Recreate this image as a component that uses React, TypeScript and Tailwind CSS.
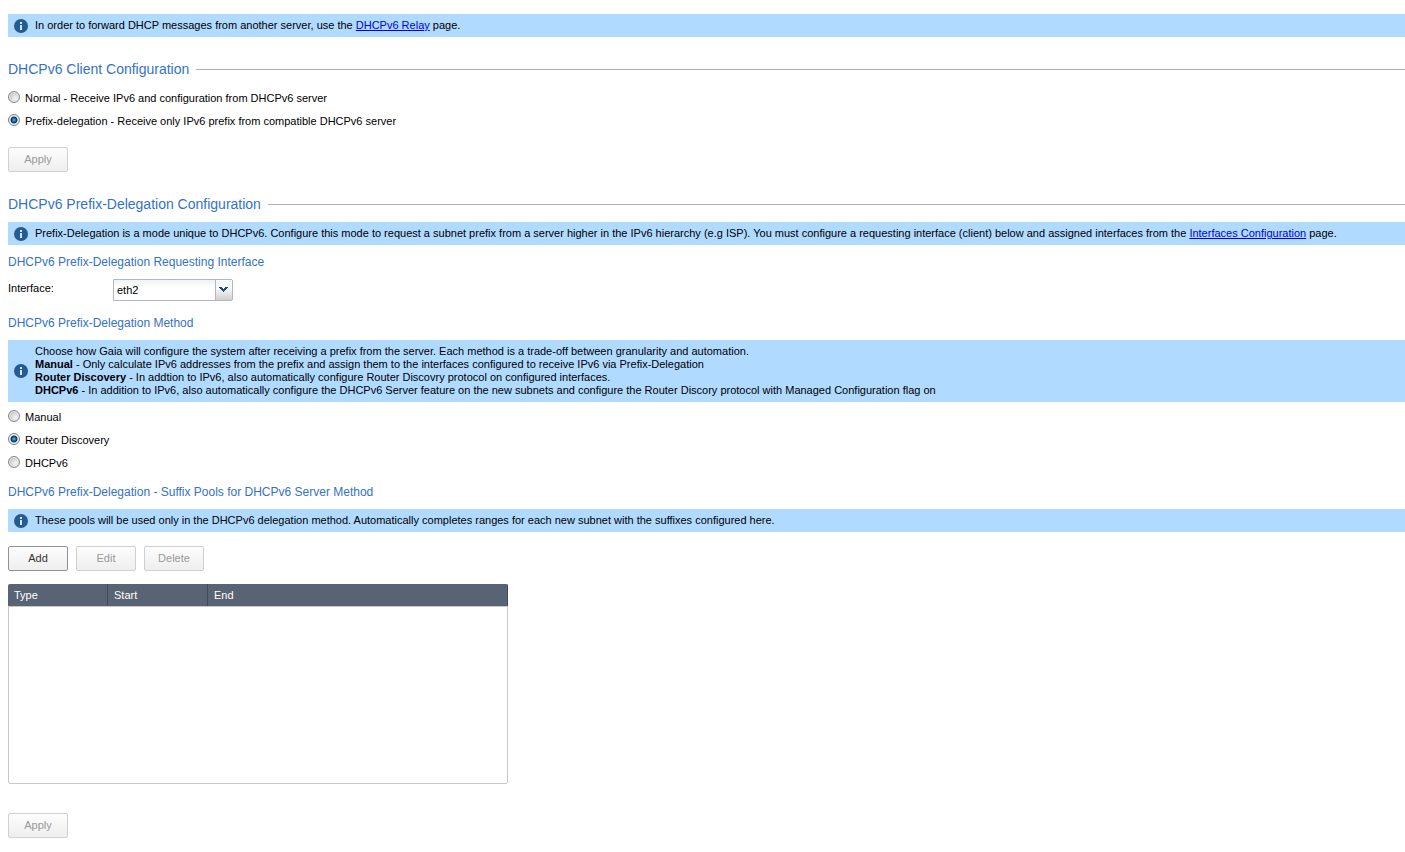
import { useState } from "react";
import type { ReactNode } from "react";

const clientModes = [
  { value: "normal", label: "Normal - Receive IPv6 and configuration from DHCPv6 server" },
  { value: "prefix", label: "Prefix-delegation - Receive only IPv6 prefix from compatible DHCPv6 server" },
];

const methods = [
  { value: "manual", label: "Manual" },
  { value: "router", label: "Router Discovery" },
  { value: "dhcpv6", label: "DHCPv6" },
];

function InfoIcon() {
  return (
    <svg viewBox="0 0 14 14" className="size-[14px] shrink-0" aria-hidden="true">
      <circle cx="7" cy="7" r="7" fill="#265a94" />
      <path d="M6 3h2v2H6zM6 6h2v5H6z" fill="#d5eaff" />
    </svg>
  );
}

function InfoBar({ children }: { children: ReactNode }) {
  return (
    <div className="flex items-center gap-[7px] bg-[#b0daff] pl-[6px]">
      <InfoIcon />
      <p className="py-[5px] leading-[13px]">{children}</p>
    </div>
  );
}

function SectionTitle({ children }: { children: ReactNode }) {
  return (
    <div className="mt-6 flex items-center gap-[7px]">
      <h2 className="text-[14px] leading-4 text-[#3572c4]">{children}</h2>
      <div className="h-px flex-1 bg-[#b0b0b0]" />
    </div>
  );
}

function SubTitle({ children }: { children: ReactNode }) {
  return <h3 className="my-[9px] text-[12px] leading-4 text-[#3572c4]">{children}</h3>;
}

function Link({ children }: { children: ReactNode }) {
  return (
    <a href="#" className="text-[#0000ee] underline">
      {children}
    </a>
  );
}

type RadioListProps = {
  name: string;
  options: { value: string; label: string }[];
  value: string;
  onChange: (value: string) => void;
};

function RadioList({ name, options, value, onChange }: RadioListProps) {
  return (
    <div>
      {options.map((o) => (
        <label key={o.value} className="flex h-[23px] items-start gap-[5px] pt-1 leading-[15px]">
          <input
            type="radio"
            name={name}
            value={o.value}
            checked={value === o.value}
            onChange={() => onChange(o.value)}
            className="size-3 shrink-0 appearance-none rounded-full border border-[#85878a] bg-[radial-gradient(circle_at_65%_65%,#f4f4f4_0,#d9dadb_4px,#c4c5c7_6px)] shadow-[inset_0_0_0_1px_#ececec] checked:border-[#77828a] checked:bg-[radial-gradient(circle,#7cc8f2_0,#2f8cc8_1px,#155a8c_2px,#0d3455_3px,#f0f3f5_4px)]"
          />
          {o.label}
        </label>
      ))}
    </div>
  );
}

function Button({ children, disabled }: { children: ReactNode; disabled?: boolean }) {
  return (
    <button
      type="button"
      disabled={disabled}
      className="block h-[25px] w-[60px] rounded-[2px] border border-[#8b9299] bg-linear-to-b from-[#fdfdfd] to-[#eeeeee] text-center leading-[23px] text-[#333333] disabled:border-[#d0d0d0] disabled:text-[#999999]"
    >
      {children}
    </button>
  );
}

export default function App() {
  const [mode, setMode] = useState("prefix");
  const [method, setMethod] = useState("router");

  return (
    <main className="bg-white pt-[14px] pb-[14px] pl-2 font-['Liberation_Sans',Arial,sans-serif] text-[11px] text-black">
      <InfoBar>
        In order to forward DHCP messages from another server, use the <Link>DHCPv6 Relay</Link> page.
      </InfoBar>

      <SectionTitle>DHCPv6 Client Configuration</SectionTitle>
      <div className="mt-[10px] mb-[14px]">
        <RadioList name="mode" options={clientModes} value={mode} onChange={setMode} />
      </div>
      <Button disabled>Apply</Button>

      <SectionTitle>DHCPv6 Prefix-Delegation Configuration</SectionTitle>
      <div className="mt-[10px]">
        <InfoBar>
          Prefix-Delegation is a mode unique to DHCPv6. Configure this mode to request a subnet prefix from a server
          higher in the IPv6 hierarchy (e.g ISP). You must configure a requesting interface (client) below and assigned
          interfaces from the <Link>Interfaces Configuration</Link> page.
        </InfoBar>
      </div>

      <SubTitle>DHCPv6 Prefix-Delegation Requesting Interface</SubTitle>
      <div className="mb-[14px] flex items-start">
        <label htmlFor="interface" className="w-[105px] leading-[18px]">
          Interface:
        </label>
        <div className="relative h-[22px] w-[120px]">
          <select
            id="interface"
            className="block h-full w-full appearance-none rounded-r-[2px] border border-[#b0b5c8] bg-linear-to-b from-[#f0f3f3] to-white to-40% pl-[3px] leading-5"
          >
            <option>eth2</option>
          </select>
          <span className="pointer-events-none absolute inset-y-px right-px flex w-[17px] items-start border-l border-[#b0b5c8] bg-linear-to-b from-[#fafafa] from-40% to-[#cfcfcf] pt-[7px] pl-[3px]">
            <svg viewBox="0 0 9 6" className="h-[6px] w-[9px]" shapeRendering="crispEdges" aria-hidden="true">
              <path d="M0 0h3v1h1v1h1V1h1V0h3v1H8v1H7v1H6v1H5v1H4V4H3V3H2V2H1V1H0z" fill="#24488c" />
            </svg>
          </span>
        </div>
      </div>

      <SubTitle>DHCPv6 Prefix-Delegation Method</SubTitle>
      <InfoBar>
        Choose how Gaia will configure the system after receiving a prefix from the server. Each method is a trade-off
        between granularity and automation.
        <br />
        <b>Manual</b> - Only calculate IPv6 addresses from the prefix and assign them to the interfaces configured to
        receive IPv6 via Prefix-Delegation
        <br />
        <b>Router Discovery</b> - In addtion to IPv6, also automatically configure Router Discovry protocol on
        configured interfaces.
        <br />
        <b>DHCPv6</b> - In addition to IPv6, also automatically configure the DHCPv6 Server feature on the new subnets
        and configure the Router Discory protocol with Managed Configuration flag on
      </InfoBar>
      <div className="mt-1">
        <RadioList name="method" options={methods} value={method} onChange={setMethod} />
      </div>

      <SubTitle>DHCPv6 Prefix-Delegation - Suffix Pools for DHCPv6 Server Method</SubTitle>
      <InfoBar>
        These pools will be used only in the DHCPv6 delegation method. Automatically completes ranges for each new
        subnet with the suffixes configured here.
      </InfoBar>

      <div className="mt-[14px] flex gap-2">
        <Button>Add</Button>
        <Button disabled>Edit</Button>
        <Button disabled>Delete</Button>
      </div>

      <div className="mt-[13px] mb-[29px] h-[200px] w-[500px] overflow-hidden rounded-[2px] bg-white">
        <table className="h-full w-full table-fixed border-separate border-spacing-0 text-left">
          <thead>
            <tr className="h-[22px] bg-[#586374] text-white">
              <th className="w-[100px] border-r border-[#3f4a5a] p-0 pl-[6px] font-normal">Type</th>
              <th className="w-[100px] border-r border-[#3f4a5a] p-0 pl-[6px] font-normal">Start</th>
              <th className="border-r border-[#3f4a5a] p-0 pl-[6px] font-normal">End</th>
            </tr>
          </thead>
          <tbody>
            <tr>
              <td colSpan={3} className="rounded-b-[2px] border border-[#c8c8c8]" />
            </tr>
          </tbody>
        </table>
      </div>

      <Button disabled>Apply</Button>
    </main>
  );
}
